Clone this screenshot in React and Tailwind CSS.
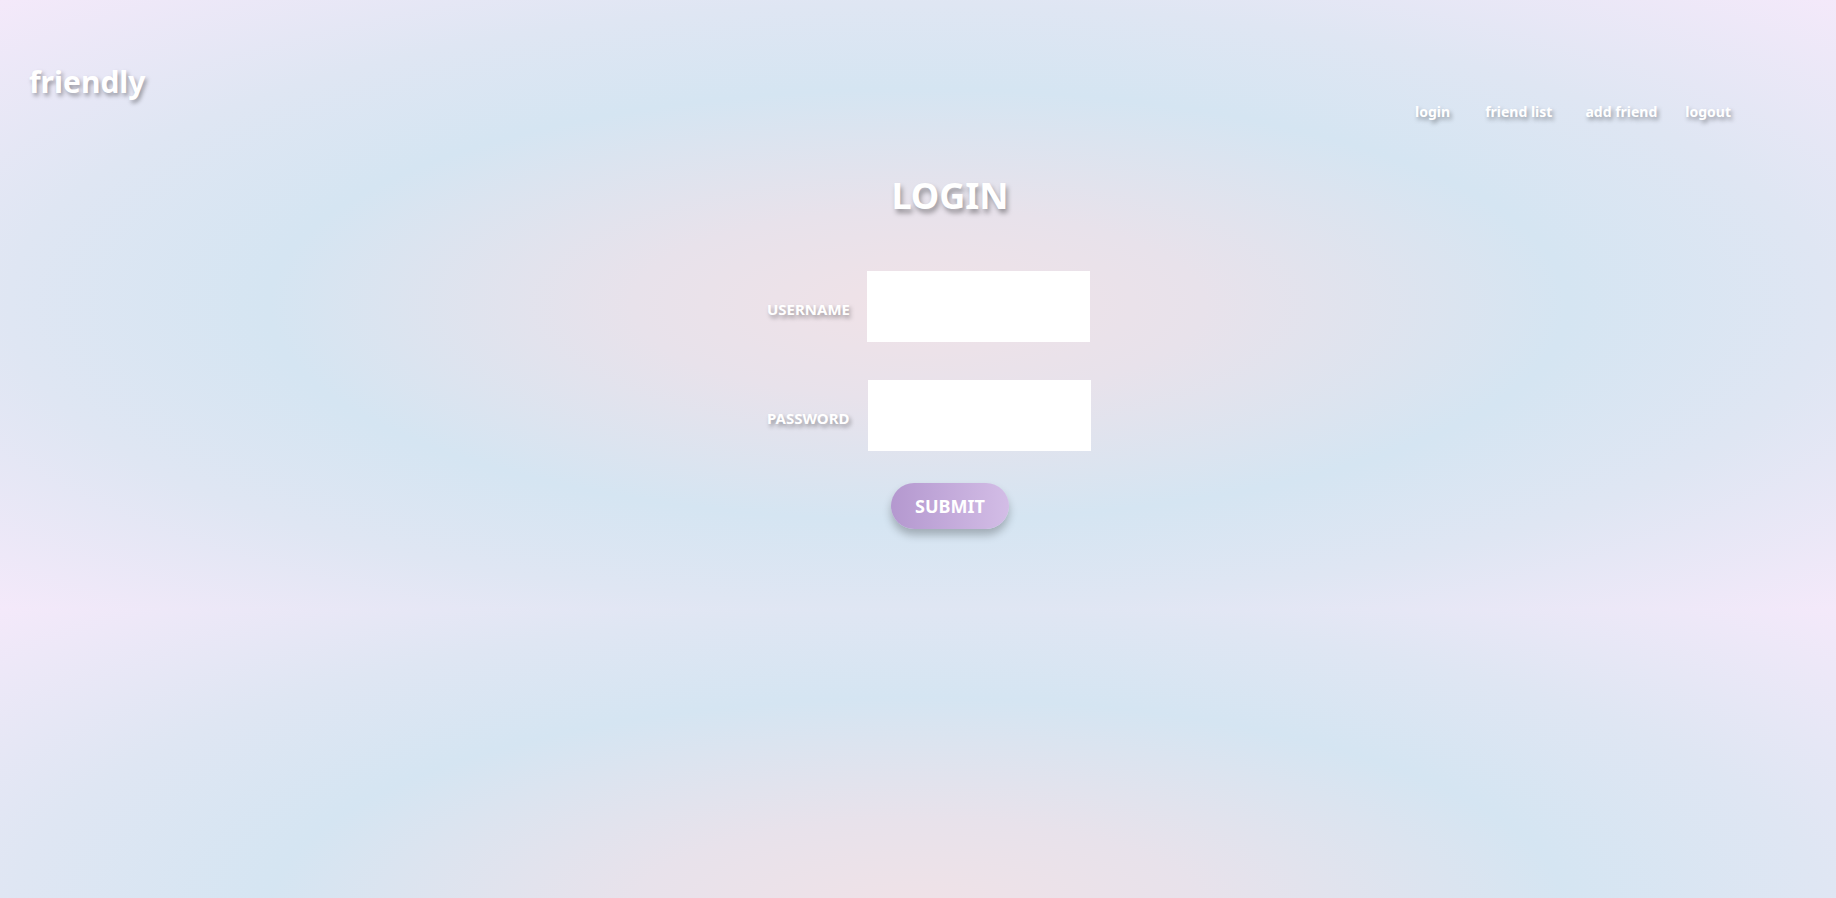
import React, { useState } from 'react';

const font = { fontFamily: '"Noto Sans", "Open Sans", sans-serif' };

const links = [
  { label: 'login', cls: 'mr-[35px]' },
  { label: 'friend list', cls: 'mr-[33px]' },
  { label: 'add friend', cls: 'mr-[28px]' },
  { label: 'logout', cls: '' },
];

const App = () => {
  const [username, setUsername] = useState('');
  const [password, setPassword] = useState('');

  return (
    <div
      style={font}
      className="min-h-screen bg-[radial-gradient(ellipse_at_center,#f0e2e7_0%,#e8e2eb_22%,#d5e5f2_50%,#dfe6f3_70%,#f4e9fa_100%)] bg-[length:100%_609px] text-white"
    >
      <header className="flex justify-between items-start pl-[29px] pr-[105px] pt-[62px]">
        <h1 className="text-[30px] font-bold leading-[40px] [text-shadow:2px_3px_4px_rgba(0,0,0,0.35)]">
          friendly
        </h1>
        <nav className="flex mt-[40px]">
          {links.map((l) => (
            <a
              key={l.label}
              href="#"
              className={`text-[14px] font-bold leading-[20px] [text-shadow:2px_3px_4px_rgba(0,0,0,0.35)] ${l.cls}`}
            >
              {l.label}
            </a>
          ))}
        </nav>
      </header>

      <main className="flex flex-col items-center pl-[64px]">
        <h2 className="mt-[52px] text-[36px] font-bold leading-[44px] [text-shadow:2px_4px_5px_rgba(0,0,0,0.35)]">
          LOGIN
        </h2>

        <form
          className="mt-[53px] mr-[42px] w-[324px] flex flex-col gap-[38px]"
          onSubmit={(e) => e.preventDefault()}
        >
          <div className="flex items-center">
            <label className="text-[15px] font-bold uppercase mt-[5px] mr-[17px] [text-shadow:2px_3px_4px_rgba(0,0,0,0.35)]">
              username
            </label>
            <input
              type="text"
              value={username}
              onChange={(e) => setUsername(e.target.value)}
              className="w-[223px] h-[71px] bg-white text-gray-800 px-3 outline-none"
            />
          </div>
          <div className="flex items-center">
            <label className="text-[15px] font-bold uppercase mt-[5px] mr-[18px] [text-shadow:2px_3px_4px_rgba(0,0,0,0.35)]">
              password
            </label>
            <input
              type="password"
              value={password}
              onChange={(e) => setPassword(e.target.value)}
              className="w-[223px] h-[71px] bg-white text-gray-800 px-3 outline-none"
            />
          </div>
        </form>

        <button
          type="button"
          className="mt-[32px] w-[118px] h-[46px] rounded-full bg-gradient-to-r from-[#b498cf] to-[#d3bde6] text-[18px] font-bold text-white shadow-[0_6px_8px_rgba(0,0,0,0.25)]"
        >
          SUBMIT
        </button>
      </main>
    </div>
  );
};

export default App;
